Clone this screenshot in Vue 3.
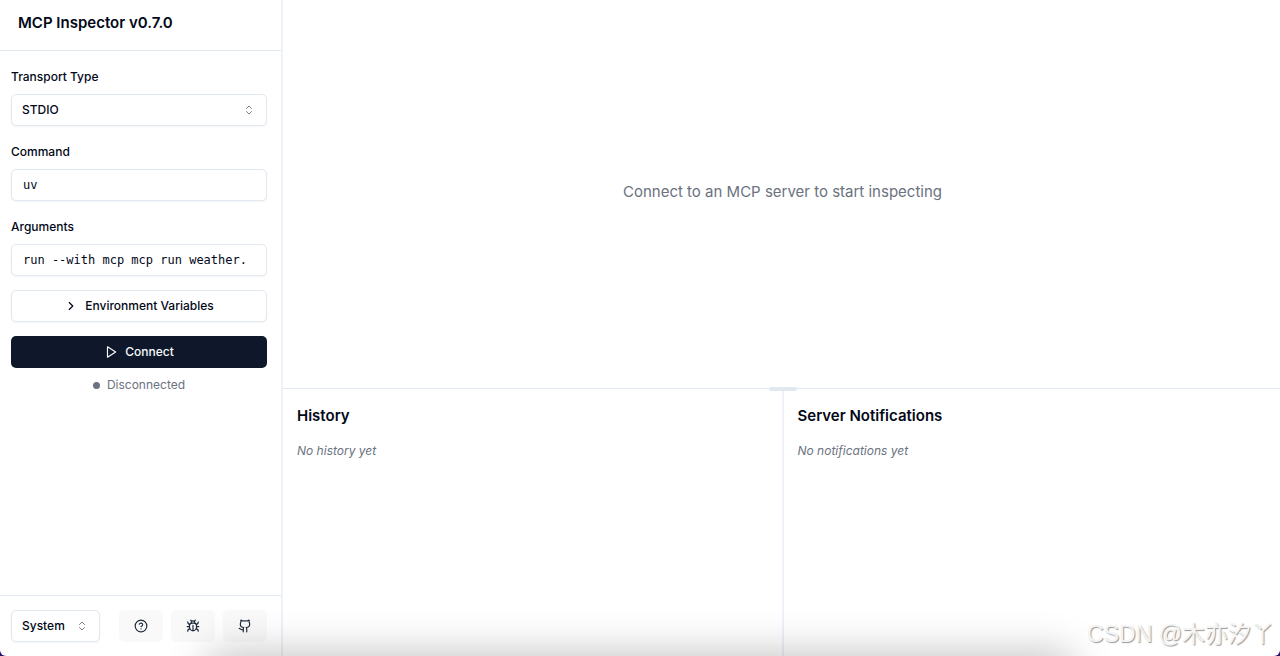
<template>
  <div class="app">
    <aside class="sidebar">
      <header class="sidebar-header">
        <h1>MCP Inspector v0.7.0</h1>
      </header>

      <form class="connection" @submit.prevent>
        <div class="field">
          <label for="transport">Transport Type</label>
          <div class="select-box">
            <select id="transport" v-model="transportType">
              <option value="stdio">STDIO</option>
              <option value="sse">SSE</option>
            </select>
            <svg class="chevrons" viewBox="0 0 24 24"><path d="m7 15 5 5 5-5M7 9l5-5 5 5" /></svg>
          </div>
        </div>
        <div class="field">
          <label for="command">Command</label>
          <input id="command" v-model="command" type="text" spellcheck="false" />
        </div>
        <div class="field">
          <label for="arguments">Arguments</label>
          <input id="arguments" v-model="args" type="text" spellcheck="false" />
        </div>
        <button class="env-btn" type="button">
          <svg class="icon" viewBox="0 0 24 24"><path d="m9 18 6-6-6-6" /></svg>
          Environment Variables
        </button>
        <div class="connect">
          <button class="connect-btn" type="submit">
            <svg class="icon" viewBox="0 0 24 24"><path d="m6 3 14 9-14 9z" /></svg>
            Connect
          </button>
          <p class="status"><span class="dot"></span>Disconnected</p>
        </div>
      </form>

      <footer class="sidebar-footer">
        <div class="select-box theme">
          <select v-model="theme" aria-label="Theme">
            <option value="system">System</option>
            <option value="light">Light</option>
            <option value="dark">Dark</option>
          </select>
          <svg class="chevrons" viewBox="0 0 24 24"><path d="m7 15 5 5 5-5M7 9l5-5 5 5" /></svg>
        </div>
        <nav class="links">
          <a v-for="link in links" :key="link.label" :href="link.href" :aria-label="link.label">
            <svg class="icon" viewBox="0 0 24 24">
              <path v-for="d in link.paths" :key="d" :d="d" />
            </svg>
          </a>
        </nav>
      </footer>
    </aside>

    <main class="content">
      <section class="workspace">
        <p>Connect to an MCP server to start inspecting</p>
      </section>
      <div class="panels">
        <span class="drag-handle"></span>
        <section class="panel">
          <h2>History</h2>
          <p>No history yet</p>
        </section>
        <section class="panel">
          <h2>Server Notifications</h2>
          <p>No notifications yet</p>
        </section>
      </div>
    </main>

    <div class="bottom-shade"></div>
    <span class="watermark">CSDN @木亦汐丫</span>
  </div>
</template>

<script setup>
import { ref } from 'vue';

const transportType = ref('stdio');
const command = ref('uv');
const args = ref('run --with mcp mcp run weather.');
const theme = ref('system');

const links = [
  {
    label: 'Help',
    href: '#help',
    paths: [
      'M12 2a10 10 0 1 0 0 20 10 10 0 0 0 0-20z',
      'M9.09 9a3 3 0 0 1 5.83 1c0 2-3 3-3 3',
      'M12 17h.01',
    ],
  },
  {
    label: 'Debugging guide',
    href: '#debugging',
    paths: [
      'm8 2 1.88 1.88',
      'M14.12 3.88 16 2',
      'M9 7.13v-1a3.003 3.003 0 1 1 6 0v1',
      'M12 20c-3.3 0-6-2.7-6-6v-3a4 4 0 0 1 4-4h4a4 4 0 0 1 4 4v3c0 3.3-2.7 6-6 6',
      'M12 20v-9',
      'M6.53 9C4.6 8.8 3 7.1 3 5',
      'M6 13H2',
      'M3 21c0-2.1 1.7-3.9 3.8-4',
      'M20.97 5c0 2.1-1.6 3.8-3.5 4',
      'M22 13h-4',
      'M17.2 17c2.1.1 3.8 1.9 3.8 4',
    ],
  },
  {
    label: 'GitHub',
    href: '#github',
    paths: [
      'M15 22v-4a4.8 4.8 0 0 0-1-3.5c3 0 6-2 6-5.5.08-1.25-.27-2.48-1-3.5.28-1.15.28-2.35 0-3.5 0 0-1 0-3 1.5-2.64-.5-5.36-.5-8 0C6 2 5 2 5 2c-.3 1.15-.3 2.35 0 3.5A5.403 5.403 0 0 0 4 9c0 3.5 3 5.5 6 5.5-.39.49-.68 1.05-.85 1.65-.17.6-.22 1.23-.15 1.85v4',
      'M9 18c-4.51 2-5-2-7-2',
    ],
  },
];
</script>

<style>
body {
  margin: 0;
  background: #2b0f6b;
}
</style>

<style scoped>
* {
  box-sizing: border-box;
}

.app {
  position: relative;
  display: flex;
  min-height: 100vh;
  overflow: hidden;
  border-radius: 0 0 6px 6px;
  background: #fff;
  color: #020817;
  font-family: Inter, "Liberation Sans", sans-serif;
  font-size: 12px;
  line-height: 20px;
}

h1, h2, p {
  margin: 0;
}

button, select, input {
  font: inherit;
  color: inherit;
}

svg {
  fill: none;
  stroke: currentColor;
  stroke-width: 2;
  stroke-linecap: round;
  stroke-linejoin: round;
}

.icon {
  width: 14px;
  height: 14px;
}

.sidebar {
  flex: 0 0 283px;
  display: flex;
  flex-direction: column;
  border-right: 2px solid #eef2f8;
}

.sidebar-header {
  padding: 11px 18px 15px;
  border-bottom: 1px solid #e2e8f0;
}

.sidebar-header h1 {
  font-size: 15px;
  font-weight: 600;
  line-height: 24px;
}

.connection {
  flex: 1;
  display: flex;
  flex-direction: column;
  gap: 14px;
  padding: 14px 14px 14px 11px;
}

.field {
  display: flex;
  flex-direction: column;
  gap: 5px;
}

.field label {
  font-weight: 500;
  line-height: 24px;
}

.select-box {
  position: relative;
}

select, input, .env-btn {
  width: 100%;
  height: 32px;
  border: 1px solid #e2e8f0;
  border-radius: 5px;
  background: #fff;
  box-shadow: 0 1px 2px rgba(0, 0, 0, 0.05);
}

select {
  display: block;
  appearance: none;
  padding: 0 11px 0 10px;
  font-weight: 500;
}

input {
  padding: 0 11px;
  font-family: "DejaVu Sans Mono", "Liberation Mono", monospace;
  font-size: 12px;
}

.chevrons {
  position: absolute;
  top: 10px;
  right: 12px;
  width: 12px;
  height: 12px;
  color: #7b808a;
  pointer-events: none;
}

.env-btn, .connect-btn {
  display: flex;
  align-items: center;
  justify-content: center;
  gap: 7px;
  font-weight: 500;
  cursor: pointer;
}

.connect {
  display: flex;
  flex-direction: column;
  gap: 7px;
}

.connect-btn {
  height: 32px;
  border: none;
  border-radius: 5px;
  background: #0f172a;
  color: #f8fafc;
}

.status {
  display: flex;
  align-items: center;
  justify-content: center;
  gap: 7px;
  color: #6b7280;
}

.dot {
  width: 7px;
  height: 7px;
  border-radius: 50%;
  background: #6b7280;
}

.sidebar-footer {
  display: flex;
  align-items: center;
  justify-content: space-between;
  padding: 14px 14px 14px 11px;
  border-top: 1px solid #e2e8f0;
}

.theme {
  width: 89px;
}

.links {
  display: flex;
  gap: 8px;
}

.links a {
  display: flex;
  align-items: center;
  justify-content: center;
  width: 44px;
  height: 32px;
  border-radius: 5px;
  background: #f9f9f9;
  color: #1e293b;
}

.content {
  flex: 1;
  display: flex;
  flex-direction: column;
  min-width: 0;
}

.workspace {
  flex: 1;
  display: flex;
  align-items: center;
  justify-content: center;
  padding: 14px 14px 18px 16px;
  color: #6b7280;
  font-size: 15px;
  line-height: 24px;
}

.panels {
  position: relative;
  display: grid;
  grid-template-columns: 1fr 1fr;
  min-height: 268px;
  border-top: 1px solid #e2e8f0;
}

.drag-handle {
  position: absolute;
  top: -2px;
  left: 50%;
  width: 28px;
  height: 4px;
  margin-left: -13px;
  border-radius: 2px;
  background: #e2e8f0;
}

.panel {
  padding: 14px;
}

.panel + .panel {
  border-left: 2px solid #eef2f8;
}

.panel h2 {
  margin-bottom: 12px;
  font-size: 15px;
  font-weight: 600;
  line-height: 26px;
}

.panel p {
  color: #6b7280;
  font-style: italic;
}

/* soft shadow rising from below the window */
.bottom-shade {
  position: absolute;
  top: 100%;
  left: 212px;
  right: 212px;
  height: 40px;
  box-shadow: 0 0 40px 4px rgba(0, 0, 0, 0.23);
  pointer-events: none;
}

.watermark {
  position: absolute;
  right: 6px;
  bottom: 4px;
  color: #f4f4f4;
  font-family: "Liberation Sans", "Noto Sans CJK SC", sans-serif;
  font-size: 23px;
  line-height: 36px;
  text-shadow: 1px 1px 1px #999;
}
</style>
